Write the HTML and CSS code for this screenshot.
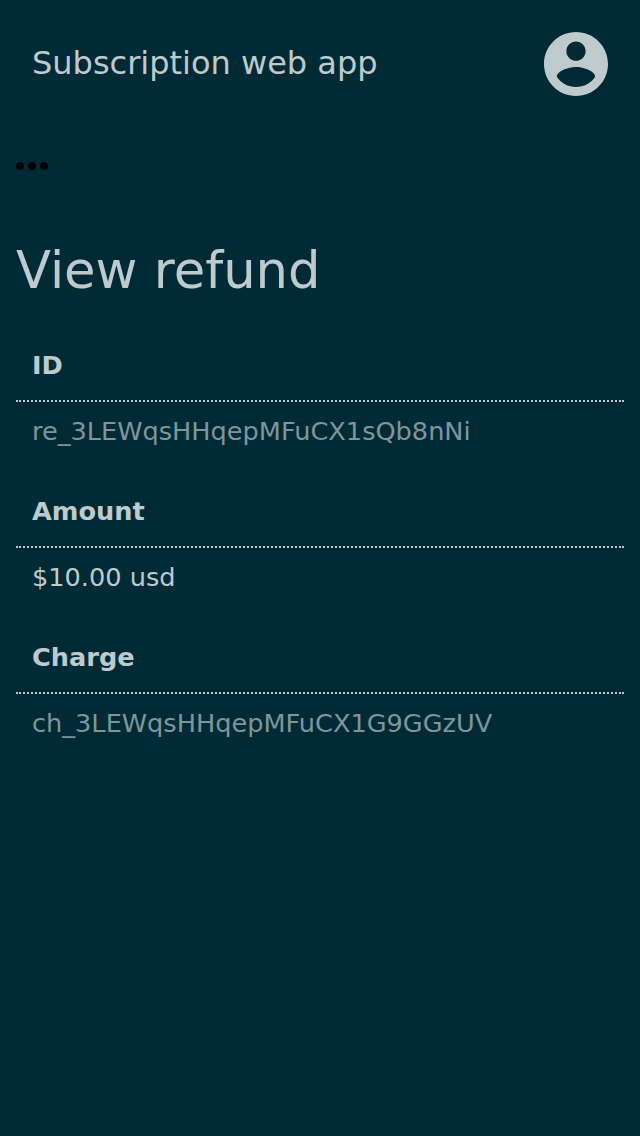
FILE: index.html
```html
<!DOCTYPE html>
<html lang="en">
<head>
<meta charset="utf-8">
<title>View refund</title>
<link rel="stylesheet" href="styles.css">
</head>
<body>
<header class="header">
<span class="brand">Subscription web app</span>
<svg class="account" viewBox="2 2 20 20" aria-label="Account"><path d="M12 2C6.48 2 2 6.48 2 12s4.48 10 10 10 10-4.48 10-10S17.52 2 12 2zm0 3c1.66 0 3 1.34 3 3s-1.34 3-3 3-3-1.34-3-3 1.34-3 3-3zm0 14.2c-2.5 0-4.71-1.28-6-3.22.03-1.99 4-3.08 6-3.08 1.99 0 5.97 1.09 6 3.08-1.29 1.94-3.5 3.22-6 3.22z"/></svg>
</header>
<nav class="menu"><svg class="dots" viewBox="0 0 32 8" aria-label="Menu"><circle cx="4" cy="4" r="4"/><circle cx="16" cy="4" r="4"/><circle cx="28" cy="4" r="4"/></svg></nav>
<main class="content">
<h1 class="title">View refund</h1>
<section class="field"><div class="label">ID</div><div class="value muted">re_3LEWqsHHqepMFuCX1sQb8nNi</div></section>
<section class="field"><div class="label">Amount</div><div class="value">$10.00 usd</div></section>
<section class="field"><div class="label">Charge</div><div class="value muted">ch_3LEWqsHHqepMFuCX1G9GGzUV</div></section>
</main>
</body>
</html>
```
FILE: styles.css
```css
body {
  margin: 0;
  min-height: 1136px;
  background: #002b36;
  color: #bfcacd;
  font-family: "DejaVu Sans", sans-serif;
  font-size: 25.6px;
}
.header {
  display: flex;
  align-items: center;
  justify-content: space-between;
  height: 128px;
  padding: 0 32px;
  box-sizing: border-box;
}
.brand { font-size: 32px; line-height: 38px; padding-bottom: 2px; }
.account { width: 64px; height: 64px; fill: currentColor; }
.menu { display: flex; height: 76px; align-items: center; padding: 0 16px; }
.dots { width: 32px; height: 8px; fill: #000; }
.content { padding: 36px 16px 0; }
.title { margin: 0 0 36px; font-size: 51.2px; line-height: 60px; font-weight: normal; }
.field { margin-bottom: 26px; }
.label {
  height: 66px;
  padding: 14px 16px 0;
  box-sizing: border-box;
  font-weight: bold;
  line-height: 30px;
  border-bottom: 2px dotted currentColor;
}
.value { height: 54px; padding: 14px 16px 0; box-sizing: border-box; line-height: 30px; }
.muted { color: #80959b; }
```
